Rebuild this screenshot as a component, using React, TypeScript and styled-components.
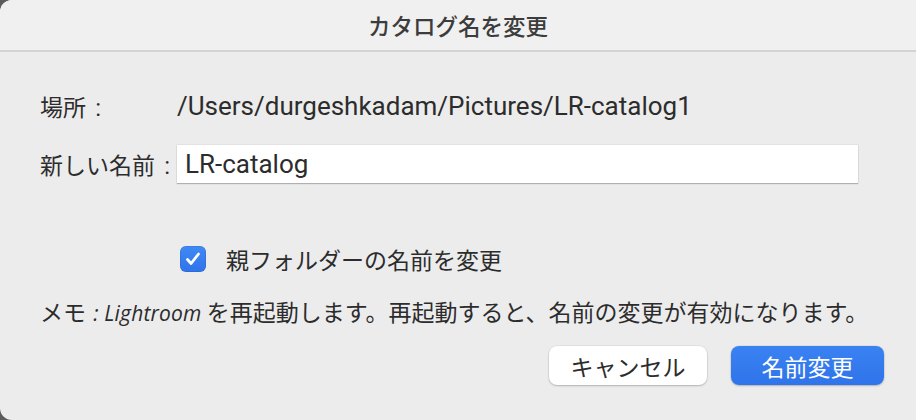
import React, { useState } from "react"
import styled, { createGlobalStyle } from "styled-components"

const colors = {
  desk: "#5c5c5c",
  title: "#f0f0f0",
  body: "#ececec",
  divider: "#d3d3d3",
  text: "#2c2c2c",
  blue: "#3a82f2",
  blueDark: "#2f74ea",
}

const GlobalStyle = createGlobalStyle`
  html, body {
    margin: 0;
    padding: 0;
    background: ${colors.desk};
  }
  body {
    font-family: "Noto Sans CJK JP", "Noto Sans", sans-serif;
    color: ${colors.text};
  }
`

const Window = styled.div`
  width: 916px;
  height: 420px;
  display: flex;
  flex-direction: column;
  background: ${colors.body};
  border-radius: 12px 0 0 12px;
  overflow: hidden;
`

const TitleBar = styled.header`
  height: 50px;
  flex-shrink: 0;
  display: flex;
  align-items: center;
  justify-content: center;
  background: ${colors.title};
  border-bottom: 2px solid ${colors.divider};
  font-size: 22.5px;
  font-weight: 500;
  color: #3c3c3c;
`

const Content = styled.main`
  display: flex;
  flex-direction: column;
  padding: 35px 32px 0 40px;
`

const Row = styled.div<{ $top?: number }>`
  display: flex;
  align-items: center;
  margin-top: ${p => p.$top ?? 0}px;
`

const Label = styled.span`
  width: 137px;
  flex-shrink: 0;
  font-size: 23px;
  white-space: nowrap;
`

const Colon = styled.span`
  margin-left: 4px;
  font-family: Roboto, sans-serif;
  font-size: 24px;
`

const Latin = styled.span`
  font-family: Roboto, "Noto Sans CJK JP", sans-serif;
  font-size: 26px;
  line-height: 38px;
`

const NameInput = styled.input`
  box-sizing: border-box;
  width: 681px;
  height: 38px;
  margin: 0;
  padding: 0 8px;
  border: none;
  outline: none;
  background: #fff;
  box-shadow: 0 1px 1px rgba(0, 0, 0, 0.22), 0 0 0 0.5px rgba(0, 0, 0, 0.08);
  font-family: Roboto, sans-serif;
  font-size: 26px;
  color: ${colors.text};
`

const CheckRow = styled.label`
  display: flex;
  align-items: center;
  gap: 20px;
  margin: 59px 0 0 140px;
  font-size: 23px;
  cursor: pointer;
`

const Box = styled.span<{ $checked: boolean }>`
  width: 26px;
  height: 26px;
  border-radius: 6px;
  display: flex;
  align-items: center;
  justify-content: center;
  background: ${p => (p.$checked ? `linear-gradient(#4189f5, ${colors.blueDark})` : "#fff")};
  box-shadow: inset 0 0 0 0.5px rgba(0, 0, 0, 0.15);
`

const Memo = styled.p`
  margin: 19px 0 0;
  font-size: 23px;
  line-height: 32px;
  white-space: nowrap;
`

const Italic = styled.i`
  margin-left: 2px;
  font-family: "Open Sans", sans-serif;
  font-size: 21px;
  letter-spacing: 0.2px;
`

const Actions = styled.div`
  display: flex;
  justify-content: flex-end;
  gap: 24px;
  margin-top: 17px;
`

const Button = styled.button<{ $primary?: boolean; $width: number }>`
  width: ${p => p.$width}px;
  height: 39px;
  border: none;
  border-radius: 8px;
  font-family: "Noto Sans CJK JP", sans-serif;
  font-size: 23px;
  cursor: pointer;
  color: ${p => (p.$primary ? "#fff" : colors.text)};
  background: ${p => (p.$primary ? `linear-gradient(${colors.blue}, ${colors.blueDark})` : "#fff")};
  box-shadow: 0 1px 2px rgba(0, 0, 0, 0.22), 0 0 0 0.5px rgba(0, 0, 0, 0.08);
`

export default function App() {
  const [name, setName] = useState("LR-catalog")
  const [renameFolder, setRenameFolder] = useState(true)

  return (
    <>
      <GlobalStyle />
      <Window>
        <TitleBar>カタログ名を変更</TitleBar>
        <Content>
          <Row>
            <Label>
              場所 <Colon>:</Colon>
            </Label>
            <Latin>/Users/durgeshkadam/Pictures/LR-catalog1</Latin>
          </Row>
          <Row $top={20}>
            <Label>
              新しい名前 <Colon>:</Colon>
            </Label>
            <NameInput value={name} onChange={e => setName(e.target.value)} />
          </Row>
          <CheckRow onClick={() => setRenameFolder(v => !v)}>
            <Box $checked={renameFolder}>
              {renameFolder && (
                <svg width="18" height="18" viewBox="0 0 18 18">
                  <path d="M3.5 9.5l3.6 4L14.5 4" fill="none" stroke="#fff" strokeWidth="2.8" strokeLinecap="round" strokeLinejoin="round" />
                </svg>
              )}
            </Box>
            親フォルダーの名前を変更
          </CheckRow>
          <Memo>
            メモ <Italic>: Lightroom</Italic> を再起動します。再起動すると、名前の変更が有効になります。
          </Memo>
          <Actions>
            <Button $width={158}>キャンセル</Button>
            <Button $primary $width={153}>
              名前変更
            </Button>
          </Actions>
        </Content>
      </Window>
    </>
  )
}
